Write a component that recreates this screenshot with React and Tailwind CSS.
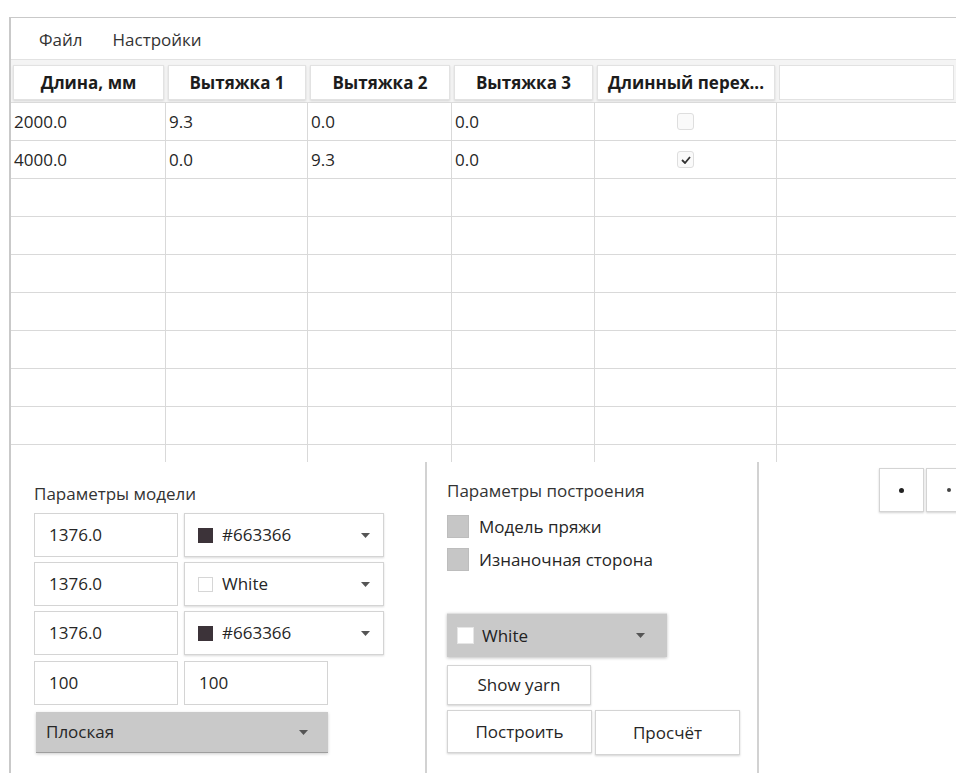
import React from 'react';

const columns = ['Длина, мм', 'Вытяжка 1', 'Вытяжка 2', 'Вытяжка 3', 'Длинный перех...'];

const rows = [
  { len: '2000.0', v1: '9.3', v2: '0.0', v3: '0.0', long: false },
  { len: '4000.0', v1: '0.0', v2: '9.3', v3: '0.0', long: true },
];

const gridCols = 'grid grid-cols-[155px_142px_144px_143px_182px_1fr]';

const Caret = () => (
  <svg width="9" height="5" viewBox="0 0 9 5" className="shrink-0">
    <path d="M0 0h9L4.5 5z" fill="#555" />
  </svg>
);

const Swatch = ({ color }) => (
  <span
    className={`inline-block w-[15px] h-[15px] shrink-0 ${
      color === 'white' ? 'bg-white border border-[#d6d6d6]' : 'bg-[#3c3339]'
    }`}
  />
);

const ColorSelect = ({ color, label, className = '' }) => (
  <div
    className={`flex items-center h-[44px] border border-[#d4d4d4] shadow-[0_1px_2px_rgba(0,0,0,0.15)] px-[13px] gap-[9px] ${className}`}
  >
    <Swatch color={color} />
    <span className="flex-1">{label}</span>
    <Caret />
  </div>
);

const Field = ({ value, className = '' }) => (
  <div className={`flex items-center h-[44px] border border-[#d4d4d4] bg-white px-[14px] ${className}`}>
    {value}
  </div>
);

const Button = ({ children, className = '' }) => (
  <div
    className={`flex items-center justify-center border border-[#d4d4d4] bg-white shadow-[0_1px_2px_rgba(0,0,0,0.18)] ${className}`}
  >
    {children}
  </div>
);

const Cell = ({ children, className = '' }) => (
  <div className={`h-[38px] border-r border-b border-[#d9d9d9] flex items-center px-[3px] ${className}`}>
    {children}
  </div>
);

const Check = ({ checked }) => (
  <span className="w-[17px] h-[17px] rounded-[3px] border border-[#dedede] bg-[#fafafa] flex items-center justify-center">
    {checked && (
      <svg width="10" height="8" viewBox="0 0 10 8">
        <path d="M1 4l3 3 5-6" stroke="#333" strokeWidth="1.8" fill="none" />
      </svg>
    )}
  </span>
);

const GrayBox = ({ children }) => (
  <div className="flex items-center gap-[10px] h-[33px]">
    <span className="w-[22px] h-[23px] bg-[#c6c6c6] border border-[#bdbdbd]" />
    <span>{children}</span>
  </div>
);

export default function App() {
  const empty = Array.from({ length: 7 });

  return (
    <div className="w-[956px] h-[773px] bg-white overflow-hidden pl-[9px] pt-[17px] font-['Open_Sans',sans-serif] text-[17px] text-[#262626]">
      <div className="h-full border-l-2 border-t border-[#c9c9c9] flex flex-col">
        {/* menu */}
        <div className="h-[42px] shrink-0 flex items-center gap-[30px] pl-[28px] pt-[3px] border-b border-[#e2e2e2] text-[#333]">
          <span>Файл</span>
          <span>Настройки</span>
        </div>

        {/* table header */}
        <div className={`${gridCols} h-[43px] shrink-0 bg-[#f4f4f4] border-b border-[#dcdcdc]`}>
          {columns.map((c) => (
            <div
              key={c}
              className="mt-[5px] mb-[2px] mx-[2px] bg-white border border-[#e2e2e2] shadow-[0_1px_2px_rgba(0,0,0,0.12)] flex items-center justify-center font-bold text-[#1c1c1c] whitespace-nowrap"
            >
              {c}
            </div>
          ))}
          <div className="mt-[5px] mb-[2px] mx-[2px] bg-white border border-[#e2e2e2]" />
        </div>

        {/* table body */}
        <div className="shrink-0">
          {rows.map((r) => (
            <div key={r.len} className={gridCols}>
              <Cell>{r.len}</Cell>
              <Cell>{r.v1}</Cell>
              <Cell>{r.v2}</Cell>
              <Cell>{r.v3}</Cell>
              <Cell className="justify-center">
                <Check checked={r.long} />
              </Cell>
              <Cell className="border-r-0" />
            </div>
          ))}
          {empty.map((_, i) => (
            <div key={i} className={gridCols}>
              <Cell />
              <Cell />
              <Cell />
              <Cell />
              <Cell />
              <Cell className="border-r-0" />
            </div>
          ))}
          <div className={`${gridCols} h-[17px]`}>
            <div className="border-r border-[#d9d9d9]" />
            <div className="border-r border-[#d9d9d9]" />
            <div className="border-r border-[#d9d9d9]" />
            <div className="border-r border-[#d9d9d9]" />
            <div className="border-r border-[#d9d9d9]" />
            <div />
          </div>
        </div>

        {/* bottom panels */}
        <div className="flex flex-1 min-h-0">
          <div className="w-[414px] shrink-0 pl-[23px] pt-[19px]">
            <div className="h-[30px] text-[#333]">Параметры модели</div>
            <div className="flex flex-col gap-[5px] mt-[2px]">
              <div className="flex gap-[6px]">
                <Field value="1376.0" className="w-[144px]" />
                <ColorSelect color="dark" label="#663366" className="w-[200px]" />
              </div>
              <div className="flex gap-[6px]">
                <Field value="1376.0" className="w-[144px]" />
                <ColorSelect color="white" label="White" className="w-[200px]" />
              </div>
              <div className="flex gap-[6px]">
                <Field value="1376.0" className="w-[144px]" />
                <ColorSelect color="dark" label="#663366" className="w-[200px]" />
              </div>
              <div className="flex gap-[6px] mt-[1px]">
                <Field value="100" className="w-[144px]" />
                <Field value="100" className="w-[144px]" />
              </div>
              <div className="w-[292px] h-[41px] ml-[2px] mt-[2px] flex items-center justify-between px-[10px] pr-[20px] bg-[#c9c9c9] border-b border-[#9e9e9e] shadow-[0_1px_3px_rgba(0,0,0,0.2)]">
                <span>Плоская</span>
                <Caret />
              </div>
            </div>
          </div>

          <div className="w-[334px] shrink-0 border-l-2 border-r-2 border-[#d2d2d2] pl-[20px] pt-[16px]">
            <div className="h-[32px] text-[#333]">Параметры построения</div>
            <GrayBox>Модель пряжи</GrayBox>
            <GrayBox>Изнаночная сторона</GrayBox>
            <div className="mt-[37px] w-[220px] h-[44px] flex items-center gap-[8px] px-[10px] pr-[22px] bg-[#c9c9c9] border-t border-[#e0e0e0] shadow-[0_1px_3px_rgba(0,0,0,0.25)]">
              <span className="w-[17px] h-[17px] bg-white border border-[#e6e6e6]" />
              <span className="flex-1 text-[#222]">White</span>
              <Caret />
            </div>
            <Button className="w-[144px] h-[40px] mt-[8px]">Show yarn</Button>
            <div className="flex gap-[3px] mt-[5px]">
              <Button className="w-[145px] h-[43px]">Построить</Button>
              <Button className="w-[145px] h-[45px]">Просчёт</Button>
            </div>
          </div>

          <div className="flex-1 pt-[6px] pl-[120px]">
            <div className="flex gap-[2px]">
              <Button className="w-[45px] h-[44px] shrink-0">
                <span className="w-[5px] h-[5px] rounded-full bg-[#222]" />
              </Button>
              <Button className="w-[45px] h-[44px] shrink-0">
                <span className="w-[4px] h-[4px] rounded-full bg-[#444]" />
              </Button>
            </div>
          </div>
        </div>
      </div>
    </div>
  );
}
